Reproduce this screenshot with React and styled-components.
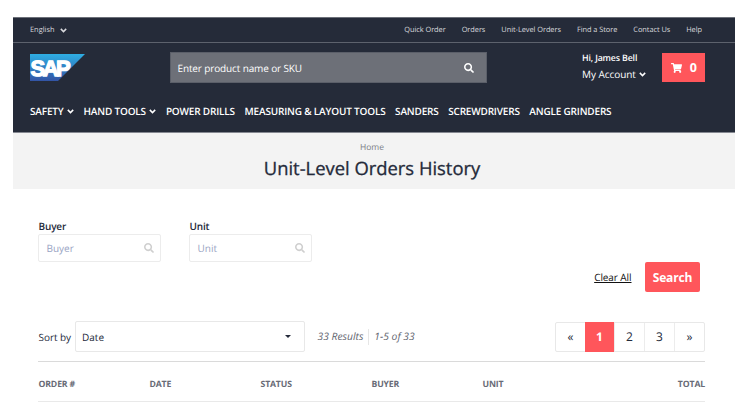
import React from "react";
import styled, { createGlobalStyle } from "styled-components";

const GlobalStyle = createGlobalStyle`
  * { box-sizing: border-box; }
  body {
    margin: 0;
    background: #fff;
    color: #242a3a;
    font-family: "Open Sans", "Noto Sans", sans-serif;
    font-size: 10px;
    text-rendering: geometricPrecision;
    overflow: hidden;
  }
`;

const Page = styled.div`
  width: 722px;
  height: 403px;
  margin-left: 13px;
  padding-top: 17px;
  overflow: hidden;
`;

const Header = styled.header`
  height: 116px;
  background: #252b39;
  color: #fff;
  border-top: 1px solid #6c7079;
  border-bottom: 1px solid #858891;
`;

const TopBar = styled.div`
  display: flex;
  align-items: center;
  justify-content: space-between;
  height: 25px;
  padding: 0 33px 0 17px;
  border-bottom: 1px solid #5d626d;
  color: #d9dade;
  font-size: 7.4px;
`;

const Language = styled.div`
  display: flex;
  align-items: center;
  gap: 6px;
`;

const TopLinks = styled.nav`
  display: flex;
  gap: 16px;
  letter-spacing: -0.05px;
`;

const TopLink = styled.a`
  white-space: nowrap;
`;

const MainBar = styled.div`
  display: grid;
  grid-template-columns: 140px 317px 95px 1fr 43px;
  align-items: center;
  height: 49px;
  padding: 0 30px 0 17px;
`;

const LogoLink = styled.a`
  display: flex;
`;

const SearchBox = styled.div`
  display: flex;
  align-items: center;
  justify-content: space-between;
  height: 31px;
  padding: 0 12px 0 6.5px;
  background: #6d7078;
  border: 1px solid #5b5f69;
  font-size: 10px;
  letter-spacing: -0.13px;
`;

const Account = styled.div`
  grid-column: 4;
  display: flex;
  flex-direction: column;
  padding-bottom: 3px;
  line-height: 16px;
`;

const Greeting = styled.span`
  font-size: 8.8px;
  font-weight: 600;
  letter-spacing: -0.15px;
`;

const AccountMenu = styled.span`
  display: flex;
  align-items: center;
  gap: 3px;
  font-size: 10px;
  letter-spacing: -0.05px;
`;

const Cart = styled.button`
  display: flex;
  align-items: center;
  justify-content: space-between;
  height: 29px;
  padding: 0 8px 0 9px;
  border: 0;
  background: #ff565b;
  color: #fff;
  font: 700 12.5px "Open Sans", sans-serif;
`;

const CategoryNav = styled.nav`
  display: flex;
  align-items: center;
  gap: 9.6px;
  height: 40px;
  padding-left: 17px;
  padding-bottom: 2px;
  font-size: 10px;
  font-weight: 600;
  letter-spacing: -0.18px;
  white-space: nowrap;
`;

const Category = styled.a`
  display: flex;
  align-items: center;
  gap: 3.4px;
`;

const TitleBand = styled.section`
  display: flex;
  flex-direction: column;
  align-items: center;
  height: 56px;
  padding: 8px 4px 0 0;
  background: #f3f3f3;
`;

const Crumb = styled.span`
  color: #7b7e87;
  font-size: 8.5px;
  line-height: 14px;
`;

const Title = styled.h1`
  margin: 0;
  font-size: 18.4px;
  font-weight: 500;
  line-height: 27px;
  -webkit-text-stroke: 0.3px #242a3a;
`;

const Content = styled.main`
  padding: 29px 30px 0 25px;
`;

const Filters = styled.div`
  display: flex;
  gap: 28px;
`;

const Field = styled.label`
  display: flex;
  flex-direction: column;
  width: 123px;
`;

const FieldLabel = styled.span`
  height: 16px;
  padding-left: 0.5px;
  font-size: 10px;
  font-weight: 600;
  letter-spacing: -0.15px;
  line-height: 16px;
`;

const FieldBox = styled.span`
  display: flex;
  align-items: center;
  justify-content: space-between;
  height: 28px;
  padding: 0 6px 0 7.5px;
  border: 1px solid #ececec;
  border-radius: 2px;
  color: #99a4c3;
`;

const Actions = styled.div`
  display: flex;
  justify-content: flex-end;
  align-items: center;
  gap: 13.5px;
  height: 30px;
  padding-right: 5px;
`;

const ClearLink = styled.a`
  color: #111;
  font-size: 10px;
  letter-spacing: -0.08px;
  text-decoration: underline;
`;

const SearchButton = styled.button`
  width: 55px;
  height: 30px;
  padding: 0;
  border: 0;
  border-radius: 2px;
  background: #ff565b;
  color: #fff;
  font: 700 12px "Open Sans", sans-serif;
  letter-spacing: -0.15px;
`;

const Toolbar = styled.div`
  display: flex;
  align-items: center;
  height: 31px;
  margin-top: 29px;
`;

const SortLabel = styled.span`
  width: 37px;
  padding-left: 0.5px;
  letter-spacing: -0.05px;
  white-space: nowrap;
`;

const Select = styled.div`
  display: flex;
  align-items: center;
  justify-content: space-between;
  width: 230px;
  height: 31px;
  padding: 0 13px 0 6px;
  border: 1px solid #e8e8e8;
  border-radius: 2px;
`;

const Results = styled.div`
  display: flex;
  align-items: center;
  margin-left: 12.5px;
  color: #62656f;
  font-size: 10.3px;
  font-style: italic;
  white-space: nowrap;
`;

const Range = styled.span`
  margin-left: 4.5px;
  padding-left: 5.5px;
  border-left: 1px solid #e6e6e6;
  line-height: 16px;
`;

const Pagination = styled.nav`
  display: flex;
  width: 150px;
  height: 30px;
  margin-left: auto;
  border: 1px solid #e8e8e8;
  border-radius: 2px;
`;

const PageCell = styled.a`
  display: flex;
  align-items: center;
  justify-content: center;
  flex: 1;
  margin: ${(p) => (p.$active ? "-1px 0" : "0")};
  border-left: ${(p) => (p.$first || p.$active ? "0" : "1px solid #ececec")};
  background: ${(p) => (p.$active ? "#ff565b" : "transparent")};
  color: ${(p) => (p.$active ? "#fff" : "#242a3a")};
  font-size: 12px;
  font-weight: ${(p) => (p.$active ? 700 : 400)};
`;

const TableHead = styled.div`
  display: grid;
  grid-template-columns: repeat(5, 111px) 1fr;
  align-items: center;
  height: 41px;
  margin-top: 9px;
  padding-top: 4px;
  padding-left: 0.5px;
  border-top: 1px solid #dadada;
  border-bottom: 1px solid #e9e9e9;
  color: #686b76;
  font-size: 8.7px;
  font-weight: 700;
  letter-spacing: -0.15px;
`;

const HeadCell = styled.span`
  text-align: ${(p) => (p.$end ? "right" : "left")};
`;

function Chevron() {
  return (
    <svg width="7" height="5" viewBox="0 0 7 5" fill="none">
      <path d="M.8.9 3.500 3.600 6.200.9" stroke="currentColor" strokeWidth="1.5" />
    </svg>
  );
}

function Magnifier({ size, color }) {
  return (
    <svg width={size} height={size} viewBox="0 0 512 512" fill={color}>
      <path d="M505 442.7L405.3 343c-4.500-4.500-10.600-7-17-7H372c27.600-35.300 44-79.700 44-128C416 93.100 322.900 0 208 0S0 93.100 0 208s93.100 208 208 208c48.300 0 92.700-16.400 128-44v16.300c0 6.400 2.500 12.500 7 17l99.700 99.700c9.400 9.400 24.600 9.400 33.900 0l28.300-28.300c9.400-9.400 9.400-24.600.1-34zM208 336c-70.700 0-128-57.200-128-128 0-70.700 57.200-128 128-128 70.700 0 128 57.200 128 128 0 70.700-57.200 128-128 128z" />
    </svg>
  );
}

function CartIcon() {
  return (
    <svg width="11" height="10" viewBox="0 0 576 512" fill="currentColor">
      <path d="M528.120 301.319l47.273-208C578.806 78.301 567.391 64 551.990 64H159.208l-9.166-44.810C147.758 8.021 137.930 0 126.529 0H24C10.745 0 0 10.745 0 24v16c0 13.255 10.745 24 24 24h69.883l70.248 343.435C147.325 417.100 136 435.222 136 456c0 30.928 25.072 56 56 56s56-25.072 56-56c0-15.674-6.447-29.835-16.824-40h209.647C430.447 426.165 424 440.326 424 456c0 30.928 25.072 56 56 56s56-25.072 56-56c0-22.172-12.888-41.332-31.579-50.405l5.517-24.276c3.413-15.018-8.002-29.319-23.403-29.319H218.117l-6.545-32h293.145c11.206 0 20.920-7.754 23.403-18.681z" />
    </svg>
  );
}

const LogoText = styled.text`
  font-family: "Liberation Sans", Arial, sans-serif;
  font-size: 22px;
  font-weight: 700;
  letter-spacing: -2.6px;
`;

function Logo() {
  return (
    <svg width="55" height="27" viewBox="0 0 55 27">
      <defs>
        <linearGradient id="logoBlue" x1="0" y1="0" x2="0" y2="1">
          <stop offset="0" stopColor="#2eaee3" />
          <stop offset="1" stopColor="#3354a5" />
        </linearGradient>
      </defs>
      <path d="M0 0H55L28 27H0Z" fill="url(#logoBlue)" />
      <LogoText x="0.6" y="21.500" fill="#fff" stroke="#fff" strokeWidth="1.3">
        SAP
      </LogoText>
    </svg>
  );
}

const topLinks = ["Quick Order", "Orders", "Unit-Level Orders", "Find a Store", "Contact Us", "Help"];

const categories = [
  { label: "SAFETY", menu: true },
  { label: "HAND TOOLS", menu: true },
  { label: "POWER DRILLS" },
  { label: "MEASURING & LAYOUT TOOLS" },
  { label: "SANDERS" },
  { label: "SCREWDRIVERS" },
  { label: "ANGLE GRINDERS" },
];

const columns = ["ORDER #", "DATE", "STATUS", "BUYER", "UNIT", "TOTAL"];
const pages = ["«", "1", "2", "3", "»"];

export default function App() {
  return (
    <Page>
      <GlobalStyle />
      <Header>
        <TopBar>
          <Language>
            English <Chevron />
          </Language>
          <TopLinks>
            {topLinks.map((l) => (
              <TopLink key={l}>{l}</TopLink>
            ))}
          </TopLinks>
        </TopBar>
        <MainBar>
          <LogoLink>
            <Logo />
          </LogoLink>
          <SearchBox>
            Enter product name or SKU
            <Magnifier size={10} color="#fff" />
          </SearchBox>
          <Account>
            <Greeting>Hi, James Bell</Greeting>
            <AccountMenu>
              My Account <Chevron />
            </AccountMenu>
          </Account>
          <Cart>
            <CartIcon /> 0
          </Cart>
        </MainBar>
        <CategoryNav>
          {categories.map((c) => (
            <Category key={c.label}>
              {c.label}
              {c.menu && <Chevron />}
            </Category>
          ))}
        </CategoryNav>
      </Header>
      <TitleBand>
        <Crumb>Home</Crumb>
        <Title>Unit-Level Orders History</Title>
      </TitleBand>
      <Content>
        <Filters>
          {["Buyer", "Unit"].map((name) => (
            <Field key={name}>
              <FieldLabel>{name}</FieldLabel>
              <FieldBox>
                {name}
                <Magnifier size={10} color="#cfcfcf" />
              </FieldBox>
            </Field>
          ))}
        </Filters>
        <Actions>
          <ClearLink>Clear All</ClearLink>
          <SearchButton>Search</SearchButton>
        </Actions>
        <Toolbar>
          <SortLabel>Sort by</SortLabel>
          <Select>
            Date
            <svg width="6" height="3" viewBox="0 0 6 3">
              <path d="M0 0H6L3 3Z" fill="#242a3a" />
            </svg>
          </Select>
          <Results>
            33 Results <Range>1-5 of 33</Range>
          </Results>
          <Pagination>
            {pages.map((p, i) => (
              <PageCell key={p} $first={i === 0} $active={p === "1"}>
                {p}
              </PageCell>
            ))}
          </Pagination>
        </Toolbar>
        <TableHead>
          {columns.map((c) => (
            <HeadCell key={c} $end={c === "TOTAL"}>
              {c}
            </HeadCell>
          ))}
        </TableHead>
      </Content>
    </Page>
  );
}
